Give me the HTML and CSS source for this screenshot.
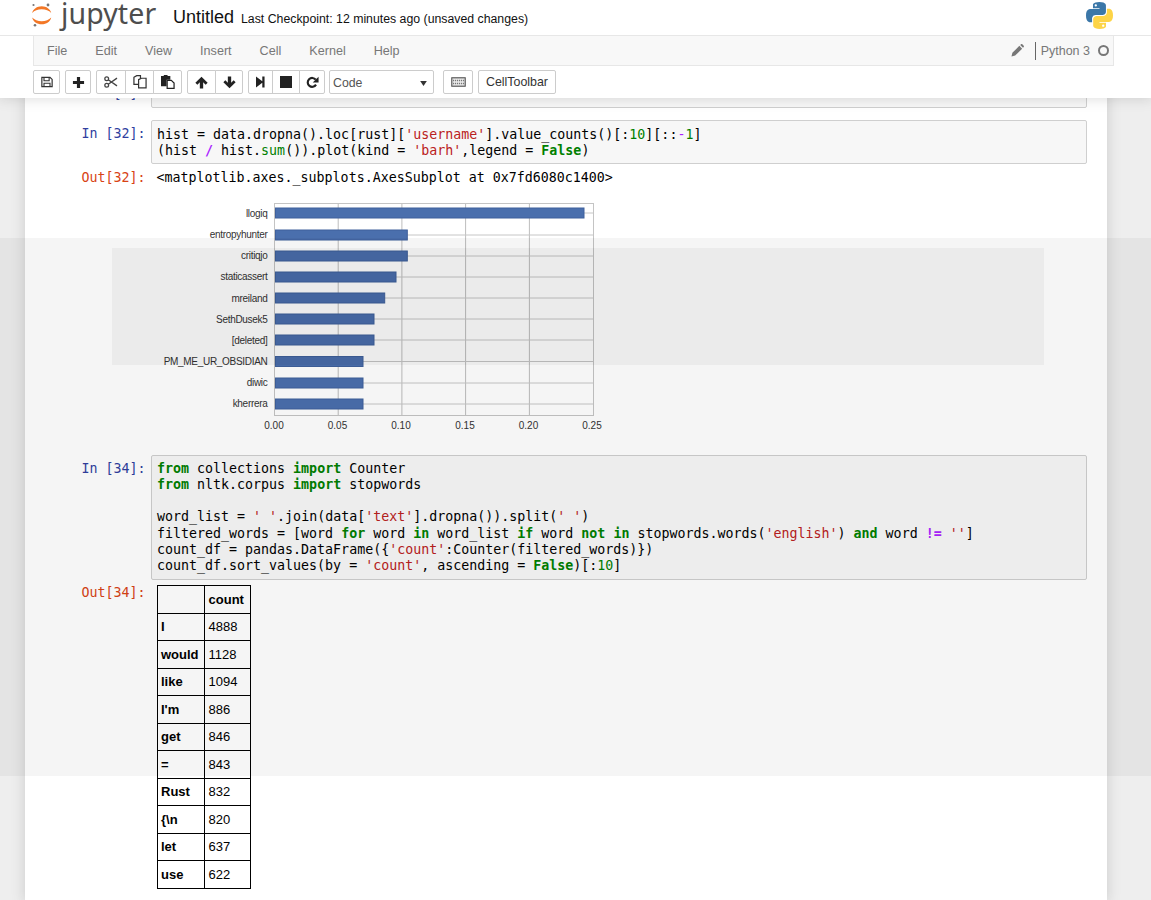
FILE: index.html
```html
<!DOCTYPE html>
<html lang="en">
<head>
<meta charset="utf-8">
<title>Untitled</title>
<link rel="stylesheet" href="styles.css">
</head>
<body>
<header class="site-header">
  <div class="top-row">
    <svg class="jlogo" viewBox="30 2 24 26" width="24" height="26">
      <path fill="#f37726" d="M32.2 13C33 9 37 6.2 41.7 6.2S50.400 9 51.200 13C49 10.600 45.600 9.300 41.700 9.300S34.400 10.600 32.200 13z"/>
      <path fill="#f37726" d="M32.200 17.500C33 21.500 37 24.300 41.700 24.300S50.400 21.500 51.200 17.500C49 19.900 45.600 21.200 41.700 21.200S34.400 19.900 32.200 17.500z"/>
      <circle cx="33.500" cy="5" r="1.100" fill="#767677"/><circle cx="48" cy="5" r="1.400" fill="#767677"/><circle cx="35" cy="25.300" r="1.300" fill="#767677"/>
    </svg>
    <span class="wordmark">jupyter</span>
    <span class="nb-name">Untitled</span>
    <span class="checkpoint">Last Checkpoint: 12 minutes ago (unsaved changes)</span>
    <svg class="pylogo" viewBox="0 0 110.600 110" width="27" height="27">
      <path fill="#3b77a8" fill-rule="evenodd" d="M54.900 0C26.800 0 28.600 12.200 28.600 12.200l0 12.600h26.800v3.800H17.900S0 26.600 0 54.900c0 28.300 15.600 27.300 15.600 27.300h9.300V69s-.5-15.600 15.400-15.600h26.500s14.900.2 14.900-14.400V14.900S84 0 54.900 0zM40.100 8.500a4.800 4.800 0 1 1 0 9.600 4.800 4.800 0 0 1 0-9.600z"/>
      <path fill="#fdd447" fill-rule="evenodd" d="M55.700 110c28.100 0 26.300-12.200 26.300-12.200V85.200H55.200v-3.800h37.500s17.900 2 17.900-26.300c0-28.300-15.600-27.300-15.600-27.300h-9.300V41s.5 15.600-15.400 15.600H44.300s-14.900-.2-14.900 14.400v24.100S27.100 110 55.700 110zM70.500 101.500a4.800 4.800 0 1 1 0-9.600 4.800 4.800 0 0 1 0 9.600z"/>
    </svg>
  </div>
  <nav class="menubar">
    <span class="menu-item">File</span>
    <span class="menu-item">Edit</span>
    <span class="menu-item">View</span>
    <span class="menu-item">Insert</span>
    <span class="menu-item">Cell</span>
    <span class="menu-item">Kernel</span>
    <span class="menu-item">Help</span>
    <svg class="pencil" viewBox="0 0 14 14" width="13" height="13"><path fill="#777" d="M0.500 13.500 1.500 9.500 9 2 12 5 4.500 12.500zM9.900 1.100 10.800.3C11.200-.1 11.800-.1 12.200.3L13.700 1.800C14.100 2.200 14.100 2.800 13.700 3.200L12.900 4.100z"/></svg>
    <span class="kernel-name">Python 3</span>
    <span class="kernel-dot"></span>
  </nav>
  <div class="toolbar">
    <div class="btn-group">
      <button class="btn btn-save"><svg viewBox="0 0 14 14" width="12" height="12"><path fill="none" stroke="#333" stroke-width="1.400" d="M1 1.500H10.500L13 4V12.500H1z"/><path fill="none" stroke="#333" stroke-width="1.300" d="M3.500 1.500V5.500H9.500V1.500M3.500 12.500V8.500H10.500V12.500"/></svg></button>
    </div>
    <div class="btn-group">
      <button class="btn btn-plus"><svg viewBox="0 0 14 14" width="13" height="13"><path fill="#222" d="M5.300 1H8.700V5.300H13V8.700H8.700V13H5.300V8.700H1V5.300H5.300z"/></svg></button>
    </div>
    <div class="btn-group">
      <button class="btn btn-cut"><svg viewBox="0 0 16 14" width="14" height="12"><g fill="none" stroke="#444" stroke-width="1.500"><circle cx="3" cy="3.200" r="2.200"/><circle cx="3" cy="10.800" r="2.200"/><path d="M4.800 4.400 15 11.500M4.800 9.600 15 2.500"/></g></svg></button>
      <button class="btn btn-copy"><svg viewBox="0 0 15 15" width="14" height="14"><g fill="#fff" stroke="#333" stroke-width="1.300"><path d="M1 2.500 4 .7H8V10H1z"/><path d="M6 5 9 3.500H14V13.800H6z"/></g></svg></button>
      <button class="btn btn-paste"><svg viewBox="0 0 15 15" width="14" height="14"><path fill="#222" d="M0 1H3V0H7V1H10V5H6V12H0z"/><path fill="#fff" stroke="#222" stroke-width="1.300" d="M6.600 5.700H11L14 8.500V14.300H6.600z"/></svg></button>
    </div>
    <div class="btn-group">
      <button class="btn btn-arrow"><svg viewBox="0 0 14 14" width="13" height="13"><path fill="#222" d="M7 .8 13.600 7.400 11.500 9.500 8.800 6.800V13.400H5.200V6.800L2.500 9.500.4 7.400z"/></svg></button>
      <button class="btn btn-arrow-b"><svg viewBox="0 0 14 14" width="13" height="13"><path fill="#222" d="M7 13.200 13.600 6.600 11.500 4.500 8.800 7.200V.6H5.200V7.200L2.500 4.500.4 6.600z"/></svg></button>
    </div>
    <div class="btn-group">
      <button class="btn btn-step"><svg viewBox="0 0 10 12" width="9" height="12"><path fill="#222" d="M0 0 7 5.200V0H9.500V12H7V6.800L0 12z"/></svg></button>
      <button class="btn btn-stop"><svg viewBox="0 0 12 12" width="12" height="12"><rect width="12" height="12" fill="#222"/></svg></button>
      <button class="btn btn-restart"><svg viewBox="0 0 14 14" width="13" height="13"><path fill="none" stroke="#222" stroke-width="2.300" d="M10.800 9.300A4.800 4.800 0 1 1 10.500 4"/><path fill="#222" d="M13.500 .8V7H7.300z"/></svg></button>
    </div>
    <div class="cell-select"><span>Code</span><svg viewBox="0 0 8 6" width="7" height="5"><path fill="#333" d="M0 0H8L4 6z"/></svg></div>
    <button class="btn btn-keys"><svg viewBox="0 0 15 10" width="15" height="10"><rect width="15" height="10" rx="1" fill="#777"/><rect x="1.500" y="1.500" width="12" height="7" fill="#eee"/><path stroke="#777" stroke-width="1.300" stroke-dasharray="1.200 .8" d="M2 3.500H13M2 6.500H13"/></svg></button>
    <button class="btn btn-text">CellToolbar</button>
  </div>
</header>

<main class="notebook">
  <section class="cell cell-clipped">
    <div class="row">
      <div class="prompt in">In&nbsp;[&nbsp;]:</div>
      <pre class="input">&nbsp;</pre>
    </div>
  </section>

  <section class="cell cell-hist">
    <div class="row">
      <div class="prompt in">In&nbsp;[32]:</div>
      <pre class="input">hist = data.dropna().loc[rust][<span class="s">'username'</span>].value_counts()[:<span class="n">10</span>][::<span class="o2">-</span><span class="n">1</span>]
(hist <span class="o">/</span> hist.<span class="b">sum</span>()).plot(kind = <span class="s">'barh'</span>,legend = <span class="k">False</span>)</pre>
    </div>
    <div class="row out-row">
      <div class="prompt out">Out[32]:</div>
      <div class="output">
        <pre class="out-text">&lt;matplotlib.axes._subplots.AxesSubplot at 0x7fd6080c1400&gt;</pre>
        <svg class="chart" viewBox="157 195 450 240" width="450" height="240">
          <g class="grid">
            <path d="M338.200 204V415M401.900 204V415M465.600 204V415M529.400 204V415"/>
            <path class="grid-h" d="M275 213H593M275 235H593M275 256H593M275 277H593M275 298H593M275 319H593M275 340H593M275 361.500H593M275 383H593M275 404H593"/>
          </g>
          <rect class="frame" x="274.500" y="203.500" width="319" height="212"/>
          <g class="bars">
            <rect x="275.500" y="208" width="308.500" height="10"/>
            <rect x="275.500" y="230" width="131.800" height="10"/>
            <rect x="275.500" y="251" width="131.800" height="10"/>
            <rect x="275.500" y="272" width="120.500" height="10"/>
            <rect x="275.500" y="293" width="109.200" height="10"/>
            <rect x="275.500" y="314" width="98.500" height="10"/>
            <rect x="275.500" y="335" width="98.500" height="10"/>
            <rect x="275.500" y="356.500" width="87.500" height="10"/>
            <rect x="275.500" y="378" width="87.500" height="10"/>
            <rect x="275.500" y="399" width="87.500" height="10"/>
          </g>
          <g class="ylabels">
            <text x="267.500" y="217">llogiq</text>
            <text x="267.500" y="238">entropyhunter</text>
            <text x="267.500" y="259">critiqjo</text>
            <text x="267.500" y="280">staticassert</text>
            <text x="267.500" y="302">mreiland</text>
            <text x="267.500" y="323">SethDusek5</text>
            <text x="267.500" y="344">[deleted]</text>
            <text x="267.500" y="365">PM_ME_UR_OBSIDIAN</text>
            <text x="267.500" y="386">diwic</text>
            <text x="267.500" y="407">kherrera</text>
          </g>
          <g class="xlabels">
            <text x="274" y="429">0.00</text>
            <text x="337.500" y="429">0.05</text>
            <text x="401" y="429">0.10</text>
            <text x="465" y="429">0.15</text>
            <text x="528.500" y="429">0.20</text>
            <text x="592" y="429">0.25</text>
          </g>
        </svg>
      </div>
    </div>
  </section>

  <section class="cell">
    <div class="row">
      <div class="prompt in">In&nbsp;[34]:</div>
      <pre class="input"><span class="k">from</span> collections <span class="k">import</span> Counter
<span class="k">from</span> nltk.corpus <span class="k">import</span> stopwords

word_list = <span class="s">' '</span>.join(data[<span class="s">'text'</span>].dropna()).split(<span class="s">' '</span>)
filtered_words = [word <span class="k">for</span> word <span class="k">in</span> word_list <span class="k">if</span> word <span class="k">not</span> <span class="k">in</span> stopwords.words(<span class="s">'english'</span>) <span class="k">and</span> word <span class="o">!=</span> <span class="s">''</span>]
count_df = pandas.DataFrame({<span class="s">'count'</span>:Counter(filtered_words)})
count_df.sort_values(by = <span class="s">'count'</span>, ascending = <span class="k">False</span>)[:<span class="n">10</span>]</pre>
    </div>
    <div class="row out-row out-row-table">
      <div class="prompt out">Out[34]:</div>
      <div class="output">
        <table class="frame-table">
          <thead><tr><th></th><th>count</th></tr></thead>
          <tbody>
            <tr><th>I</th><td>4888</td></tr>
            <tr><th>would</th><td>1128</td></tr>
            <tr><th>like</th><td>1094</td></tr>
            <tr><th>I'm</th><td>886</td></tr>
            <tr><th>get</th><td>846</td></tr>
            <tr><th>=</th><td>843</td></tr>
            <tr><th>Rust</th><td>832</td></tr>
            <tr><th>{\n</th><td>820</td></tr>
            <tr><th>let</th><td>637</td></tr>
            <tr><th>use</th><td>622</td></tr>
          </tbody>
        </table>
      </div>
    </div>
  </section>
</main>

<div class="dim-band"></div>
<div class="dim-inner"></div>
</body>
</html>
```
FILE: styles.css
```css
* { box-sizing: border-box; }
html, body { margin: 0; padding: 0; }
body {
  width: 1151px;
  height: 900px;
  overflow: hidden;
  background: #eeeeee;
  font-family: "Liberation Sans", Arial, sans-serif;
  color: #000;
  position: relative;
  display: flex;
  flex-direction: column;
}

/* header */
.site-header {
  position: relative;
  z-index: 2;
  height: 98px;
  flex: none;
  background: #fff;
  box-shadow: 0 0 12px 1px rgba(87, 87, 87, 0.2);
}
.top-row {
  height: 36px;
  display: flex;
  align-items: flex-start;
  border-bottom: 1px solid #e7e7e7;
  padding-left: 30px;
}
.jlogo { margin-top: 2px; flex: none; }
.wordmark {
  margin-left: 7px;
  font-family: "Noto Sans", sans-serif;
  font-size: 28.500px;
  line-height: 26px;
  letter-spacing: 0.100px;
  color: #4e4e4e;
  width: 112px;
}
.nb-name { font-size: 18px; line-height: 22px; margin-top: 6px; color: #111; }
.checkpoint { font-size: 12.300px; line-height: 18px; margin-left: 7px; margin-top: 10px; color: #111; }
.pylogo { margin-left: auto; margin-right: 38px; margin-top: 2px; }

.menubar {
  margin-left: 33px;
  width: 1081px;
  height: 30px;
  display: flex;
  align-items: center;
  background: #f8f8f8;
  border: 1px solid #e7e7e7;
  border-top: 0;
  padding-left: 13px;
  font-size: 12.600px;
  color: #777;
}
.menu-item { margin-right: 28px; }
.pencil { margin-left: auto; }
.kernel-name { margin-left: 11px; border-left: 1px solid #666; padding-left: 5px; line-height: 18px; font-size: 12.500px; }
.kernel-dot {
  width: 11px;
  height: 11px;
  border: 2px solid #777;
  border-radius: 50%;
  margin-left: 8px;
  margin-right: 4px;
}

.toolbar {
  margin-top: 4px;
  margin-left: 33px;
  height: 24px;
  display: flex;
  align-items: stretch;
}
.btn-group { display: flex; margin-right: 5px; }
.btn, .btn-arrow-b {
  height: 24px;
  padding: 0;
  display: flex;
  align-items: center;
  justify-content: center;
  background: #fff;
  border: 1px solid #ccc;
  font-family: inherit;
  font-size: 12.400px;
  color: #333;
}
.btn-group > * { margin-left: -1px; }
.btn-group > :first-child { margin-left: 0; border-radius: 2px 0 0 2px; }
.btn-group > :last-child { border-radius: 0 2px 2px 0; }
.btn-group > :only-child { border-radius: 2px; }
.btn-save { width: 27px; }
.btn-plus { width: 26px; }
.btn-cut { width: 30px; }
.btn-copy { width: 29px; }
.btn-paste { width: 29px; }
.btn-arrow { width: 29px; }
.btn-arrow-b { width: 28px; }
.btn-step { width: 25px; }
.btn-stop { width: 28px; }
.btn-restart { width: 26px; }
.cell-select {
  width: 105px;
  margin-left: -1px;
  margin-right: 9px;
  display: flex;
  align-items: center;
  justify-content: space-between;
  padding: 2px 6px 0 3px;
  border: 1px solid #ccc;
  border-radius: 2px;
  background: #fff;
  font-size: 12.300px;
  color: #555;
}
.btn-keys { width: 30px; border-radius: 2px; margin-right: 5px; }
.btn-text { width: 78px; border-radius: 2px; }

/* notebook */
.notebook {
  position: relative;
  z-index: 1;
  flex: 1;
  margin-left: 25px;
  width: 1082px;
  margin-top: -17.800px;
  padding: 0 20px;
  background: #fff;
  box-shadow: 0 0 12px 1px rgba(87, 87, 87, 0.2);
}
.cell { margin-bottom: 12px; }
.row { display: flex; }
.prompt {
  flex: none;
  width: 106px;
  padding: 6px 5.500px 0 0;
  text-align: right;
  font-family: "DejaVu Sans Mono", monospace;
  font-size: 13.300px;
  line-height: 1.21429;
}
.prompt.in { color: #303f9f; }
.prompt.out { color: #d84315; padding-top: 0; }
.input {
  flex: 1;
  margin: 0;
  padding: 5px;
  border: 1px solid #cfcfcf;
  border-radius: 2px;
  background: #f7f7f7;
  font-family: "DejaVu Sans Mono", monospace;
  font-size: 13.300px;
  line-height: 1.21429;
  color: #000;
}
.cell-hist .input { padding: 5.500px 5px 4.200px; }
.cell-hist .out-row { margin-top: 5.300px; }
.k { color: #008000; font-weight: bold; }
.s { color: #ba2121; }
.n { color: #008000; }
.b { color: #008000; }
.o { color: #aa22ff; font-weight: bold; }
.o2 { color: #aa22ff; }

.out-row { margin-top: 5px; }
.out-row-table { margin-top: 5.100px; }
.output { flex: 1; padding-left: 5.500px; }
.out-text {
  margin: 0;
  font-family: "DejaVu Sans Mono", monospace;
  font-size: 13.300px;
  line-height: 1.21429;
}
.chart { display: block; margin-top: 9.300px; margin-bottom: 7.900px; }
.grid path { stroke: #bdbdbd; stroke-width: 1; fill: none; }
.grid .grid-h { stroke: #c6c6c6; }
.frame { fill: none; stroke: #c4c4c4; stroke-width: 1; }
.bars rect { fill: #4a6fad; stroke: #3f609c; stroke-width: 1; }
.ylabels text {
  font-family: "Liberation Sans", Arial, sans-serif;
  font-size: 10px;
  fill: #333;
  text-anchor: end;
  letter-spacing: -0.300px;
}
.xlabels text {
  font-family: "Liberation Sans", Arial, sans-serif;
  font-size: 10px;
  fill: #333;
  text-anchor: middle;
}

.frame-table {
  border-collapse: collapse;
  font-size: 13px;
  color: #000;
}
.frame-table th, .frame-table td {
  border: 1px solid #000;
  height: 27.500px;
  padding: 1px 5.500px 0 3.500px;
  text-align: left;
  line-height: 20px;
}
.frame-table thead th + th { padding-right: 6.500px; }

/* overlay that dims the shot */
.dim-band {
  position: absolute;
  z-index: 3;
  left: 0;
  top: 238px;
  width: 1151px;
  height: 538px;
  background: rgba(0, 0, 0, 0.04);
  pointer-events: none;
}
.dim-inner {
  position: absolute;
  z-index: 4;
  left: 112px;
  top: 248px;
  width: 932px;
  height: 117px;
  background: rgba(0, 0, 0, 0.04);
  pointer-events: none;
}
```
